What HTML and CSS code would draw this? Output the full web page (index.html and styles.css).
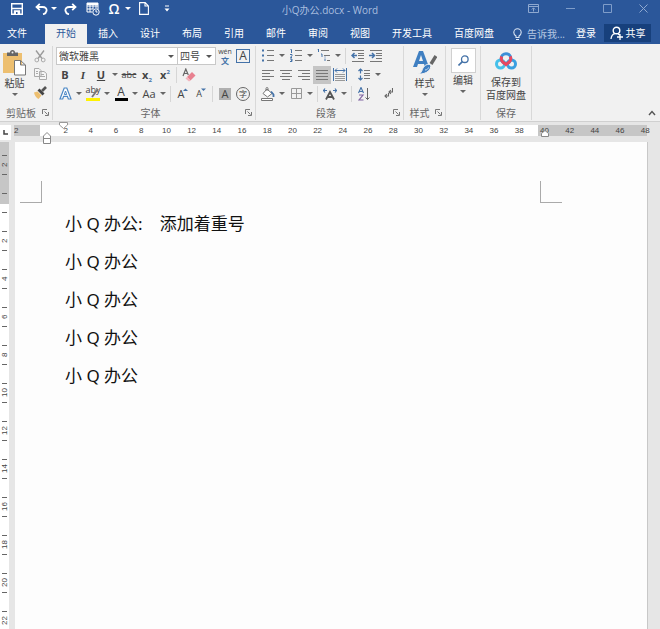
FILE: index.html
```html
<!DOCTYPE html>
<html lang="zh-CN">
<head>
<meta charset="utf-8">
<title>小Q办公.docx - Word</title>
<link rel="stylesheet" href="styles.css">
</head>
<body>
<header class="titlebar">
  <div class="quick">
    <button class="qa w34" aria-label="保存"><svg width="12" height="12" viewBox="0 0 12 12"><path d="M.7.7h10.6v10.6H.7z" fill="none" stroke="#fff" stroke-width="1.4"/><path d="M1 5.500h10M3.500 8h5v3h-5z" stroke="#fff" stroke-width="1.400" fill="#fff"/><path d="M5 9h1.500v2H5z" fill="#2b579a"/></svg></button>
    <button class="qa w14" aria-label="撤消"><svg width="13" height="12" viewBox="0 0 13 12"><path d="M4.800.8 1.500 4l3.300 3.200M2 4h5.500c3 0 4.500 1.500 4 4-.3 1.600-1.500 2.800-3.500 3.300" fill="none" stroke="#fff" stroke-width="1.800"/></svg></button>
    <button class="qa w12" aria-label="撤消选项"><i class="caret light"></i></button>
    <button class="qa w20" aria-label="恢复"><svg width="13" height="12" viewBox="0 0 13 12"><path d="M8.200.8 11.500 4 8.200 7.200M11 4H5.500c-3 0-4.500 1.500-4 4 .3 1.600 1.500 2.800 3.500 3.300" fill="none" stroke="#fff" stroke-width="1.800"/></svg></button>
    <button class="qa w26" aria-label="日期和时间"><svg width="14" height="14" viewBox="0 0 14 14"><path d="M1 1h11v6M1 1v9h5M1 4h11M1 7h6M4 1v9M7 1v6M10 1v5" fill="none" stroke="#fff"/><path d="M1 1h11v2H1z" fill="#fff"/><circle cx="10" cy="10" r="3.200" fill="#2b579a" stroke="#fff"/><path d="M10 8v2h1.500" fill="none" stroke="#fff"/></svg></button>
    <button class="qa w16 omega" aria-label="符号">Ω</button>
    <button class="qa w12" aria-label="符号选项"><i class="caret light"></i></button>
    <button class="qa w20" aria-label="新建"><svg width="10" height="13" viewBox="0 0 10 13"><path d="M.6.6h5.600L9.400 4v8.400H.6zM6 .6V4h3.400" fill="none" stroke="#fff" stroke-width="1.100"/></svg></button>
    <button class="qa w26" aria-label="自定义快速访问工具栏"><svg width="6" height="7" viewBox="0 0 6 7"><path d="M1 1h4" stroke="#fff"/><path d="M.5 3.500h5L3 6.500z" fill="#fff"/></svg></button>
  </div>
  <h1 class="doc-title">小Q办公.docx - Word</h1>
  <div class="window">
    <button aria-label="功能区显示选项"><svg width="11" height="9" viewBox="0 0 11 9"><path d="M.5.500h10v8H.5zM.5 2.500h10M5.500 7.500V4M3.800 5.500l1.700-1.700 1.700 1.700" fill="none" stroke="#8fa9d0"/></svg></button>
    <button aria-label="最小化"><svg width="9" height="9" viewBox="0 0 9 9"><path d="M0 4.500h9" stroke="#7f9dc9"/></svg></button>
    <button aria-label="最大化"><svg width="9" height="9" viewBox="0 0 9 9"><path d="M.5.500h8v8h-8z" fill="none" stroke="#7f9dc9"/></svg></button>
    <button aria-label="关闭"><svg width="9" height="9" viewBox="0 0 9 9"><path d="m.5.500 8 8m0-8-8 8" stroke="#8fa9d0"/></svg></button>
  </div>
</header>
<nav class="tabs">
  <a class="file" href="#">文件</a><a class="active" href="#">开始</a><a href="#">插入</a><a href="#">设计</a><a href="#">布局</a><a href="#">引用</a><a href="#">邮件</a><a href="#">审阅</a><a href="#">视图</a><a href="#">开发工具</a><a href="#">百度网盘</a>
  <button class="tell"><svg width="9" height="13" viewBox="0 0 9 13"><path d="M3 9.500V8C1.500 7 .8 6 .8 4.500a3.700 3.700 0 0 1 7.400 0C8.200 6 7.500 7 6 8v1.500zM3 11.500h3" fill="none" stroke="#dbe5f3" stroke-width="1.100"/></svg>告诉我...</button>
  <a class="login" href="#">登录</a>
  <button class="share"><svg width="13" height="14" viewBox="0 0 13 14"><circle cx="6.500" cy="4.500" r="3.300" fill="none" stroke="#fff" stroke-width="1.400"/><path d="M1 13c.3-3 1.500-4.700 3.800-5.300M8 8l1.500 1M7 11h6M10 8v6" fill="none" stroke="#fff" stroke-width="1.300"/></svg>共享</button>
</nav>
<section class="ribbon" aria-label="开始">
  <div class="group clipboard">
    <div class="body row-body">
      <button class="big"><svg width="23" height="26" viewBox="0 0 23 26"><path d="M0 3h19v20H0z" fill="#edbf70"/><path d="M4 2.500h3a2.500 2.500 0 0 1 5 0h3V6H4z" fill="#666"/><circle cx="9.500" cy="2.500" r="1" fill="#f1f1f1"/><path d="M11.500 10.500h6l5 4.500v10h-11zM17.500 10.500V15h5" fill="#fff" stroke="#777"/></svg><span>粘贴</span><i class="caret"></i></button>
      <div class="stack">
        <button class="ic" aria-label="剪切"><svg width="12" height="13" viewBox="0 0 12 13"><path d="m2 .5 6 8M10 .5l-6 8" stroke="#999" stroke-width="1.300"/><circle cx="2.800" cy="10" r="1.900" fill="none" stroke="#aaa"/><circle cx="9.200" cy="10" r="1.900" fill="none" stroke="#aaa"/></svg></button>
        <button class="ic" aria-label="复制"><svg width="13" height="12" viewBox="0 0 13 12"><path d="M.5.500H5l2 2V8.500H.5zM5.500 3.500H10l2.500 2v6h-7z" fill="#f5f5f5" stroke="#aaa"/><path d="M2 3.500h2M2 5.500h2M7 6.500h3M7 8.500h4" stroke="#aaa"/></svg></button>
        <button class="ic" aria-label="格式刷"><svg width="13" height="13" viewBox="0 0 13 13"><path d="m0 6.500 3.500-1L7.500 9.500 4.500 13C2.500 12 .5 9.500 0 6.500z" fill="#edbf70"/><path d="m3.500 4.500 5 5L10.500 7.500 5.500 2.500z" fill="#444"/><path d="m8 5 4-4" stroke="#555" stroke-width="2.600"/></svg></button>
      </div>
    </div>
    <footer><span>剪贴板</span><button class="launch" aria-label="剪贴板设置"><svg width="7" height="7" viewBox="0 0 7 7"><path d="M.5 5V.500H5M2.500 2.500l3 3M6.500 3v3.500H3" fill="none" stroke="#777"/></svg></button></footer>
  </div>

  <div class="group font">
    <div class="body">
      <div class="row first">
        <label class="combo family"><select aria-label="字体"><option>微软雅黑</option></select></label><label class="combo size"><select aria-label="字号"><option>四号</option></select></label>
        <button class="ic pinyin" aria-label="拼音指南"><span>wén</span><b>文</b></button>
        <button class="ic" aria-label="字符边框"><span class="boxed">A</span></button>
      </div>
      <div class="row">
        <button class="ic"><b>B</b></button><button class="ic serif"><em>I</em></button><button class="ic"><b class="under">U</b></button><button class="dd" aria-label="下划线选项"><i class="caret"></i></button><button class="ic small"><s>abc</s></button><button class="ic"><b>x<sub>2</sub></b></button><button class="ic"><b>x<sup>2</sup></b></button><i class="sep"></i>
        <button class="ic" aria-label="清除格式"><svg width="14" height="14" viewBox="0 0 14 14"><path d="m1 8 2.800-7 2.500 6M2 5.500h3.500" fill="none" stroke="#666" stroke-width="1.200"/><path d="m5 9 5-5 3.500 3.500-5 5z" fill="#e8808f"/><path d="m3.500 10.500 1.500-1.500 3.500 3.500L7 13.500z" fill="#f3b3bb"/></svg></button>
      </div>
      <div class="row">
        <button class="ic" aria-label="文本效果"><svg width="13" height="13" viewBox="0 0 13 13"><path d="M5.200 1h2.600L12 12H9.300l-.9-2.700H4.600L3.700 12H1z" fill="#fff" stroke="#4b87c5" stroke-width="1.200"/><path d="M5.300 7.500h2.400L6.500 4z" fill="#fff" stroke="#4b87c5"/></svg></button><button class="dd" aria-label="文本效果选项"><i class="caret"></i></button>
        <button class="ic mark" aria-label="突出显示"><span>aby</span><svg width="14" height="14" viewBox="0 0 14 14"><path d="M0 11h14v3H0z" fill="#fff200"/><path d="m6 10 6-8" stroke="#777" stroke-width="1.800"/></svg></button><button class="dd" aria-label="突出显示选项"><i class="caret"></i></button>
        <button class="ic"><span class="inked">A</span></button><button class="dd" aria-label="字体颜色选项"><i class="caret"></i></button><button class="ic">Aa</button><button class="dd" aria-label="更改大小写选项"><i class="caret"></i></button><i class="sep"></i>
        <button class="ic" aria-label="增大字号">A<svg class="tip" width="5" height="12" viewBox="0 0 5 12"><path d="M0 3h5L2.500.500z" fill="#4472a8"/></svg></button><button class="ic small" aria-label="减小字号">A<svg class="tip" width="5" height="12" viewBox="0 0 5 12"><path d="M0 .5h5L2.500 3z" fill="#4472a8"/></svg></button><i class="sep"></i>
        <button class="ic"><span class="shade">A</span></button><button class="ic"><span class="ring">字</span></button>
      </div>
    </div>
    <footer><span>字体</span><button class="launch" aria-label="字体设置"><svg width="7" height="7" viewBox="0 0 7 7"><path d="M.5 5V.500H5M2.500 2.500l3 3M6.500 3v3.500H3" fill="none" stroke="#777"/></svg></button></footer>
  </div>

  <div class="group paragraph">
    <div class="body">
      <div class="row first">
        <button class="ic" aria-label="项目符号"><svg width="12" height="13" viewBox="0 0 12 13"><path d="M0 1.500h2M0 6.500h2M0 11.500h2" stroke="#4472a8" stroke-width="2"/><path d="M5 1.500h7M5 6.500h7M5 11.500h7" stroke="#777"/></svg></button><button class="dd" aria-label="项目符号选项"><i class="caret"></i></button>
        <button class="ic" aria-label="编号"><svg width="12" height="13" viewBox="0 0 12 13"><path d="M.5.500h1V4M0 5.500h2v1L.5 8.500H2M0 10h2v1.200H1h1v1.300H0" fill="none" stroke="#4472a8"/><path d="M5 1.500h7M5 6.500h7M5 11.500h7" stroke="#777"/></svg></button><button class="dd" aria-label="编号选项"><i class="caret"></i></button>
        <button class="ic" aria-label="多级列表"><svg width="14" height="13" viewBox="0 0 14 13"><path d="M.5 0h1v3M4 5h1v3M8 9.500V12M8 7.500v1" fill="none" stroke="#4472a8"/><path d="M4 1.500h8M7 6.500h6M10 11.500h3" stroke="#777"/></svg></button><button class="dd" aria-label="多级列表选项"><i class="caret"></i></button><i class="sep"></i>
        <button class="ic" aria-label="减少缩进"><svg width="14" height="12" viewBox="0 0 14 12"><path d="M1 .5h12M7 3.500h6M7 5.500h6M7 8.500h6M1 11.500h12" stroke="#777"/><path d="M6 5.500H1M3.500 3 1 5.500 3.500 8" fill="none" stroke="#4472a8" stroke-width="1.500"/></svg></button>
        <button class="ic" aria-label="增加缩进"><svg width="14" height="12" viewBox="0 0 14 12"><path d="M1 .5h12M7 3.500h6M7 5.500h6M7 8.500h6M1 11.500h12" stroke="#777"/><path d="M0 5.500h5M3 3l2.500 2.500L3 8" fill="none" stroke="#4472a8" stroke-width="1.500"/></svg></button>
      </div>
      <div class="row">
        <button class="ic" aria-label="左对齐"><svg width="12" height="10" viewBox="0 0 12 10"><path d="M0 .5h12M0 3.500h8M0 6.500h12M0 9.500h8" stroke="#777"/></svg></button>
        <button class="ic" aria-label="居中"><svg width="12" height="10" viewBox="0 0 12 10"><path d="M0 .5h12M2 3.500h8M0 6.500h12M2 9.500h8" stroke="#777"/></svg></button>
        <button class="ic" aria-label="右对齐"><svg width="12" height="10" viewBox="0 0 12 10"><path d="M0 .5h12M4 3.500h8M0 6.500h12M4 9.500h8" stroke="#777"/></svg></button>
        <button class="ic on" aria-label="两端对齐"><svg width="12" height="10" viewBox="0 0 12 10"><path d="M0 .5h12M0 3.500h12M0 6.500h12M0 9.500h12" stroke="#777"/></svg></button>
        <button class="ic" aria-label="分散对齐"><svg width="14" height="13" viewBox="0 0 14 13"><path d="M.5 0v13M13.500 0v13" stroke="#4472a8"/><path d="M2 2.500h10M4 .5l-2 2 2 2M10 .5l2 2-2 2" fill="none" stroke="#4472a8"/><path d="M2 6.500h10M2 8.500h10M2 10.500h10M2 12.500h10" stroke="#999"/></svg></button><i class="sep blank"></i>
        <button class="ic" aria-label="行距"><svg width="12" height="13" viewBox="0 0 12 13"><path d="M2.500 1v4.500M2.500 7.500V12M.5 3l2-2 2 2M.5 10l2 2 2-2" fill="none" stroke="#4472a8" stroke-width="1.200"/><path d="M6 2.500h6M6 5.500h6M6 7.500h6M6 10.500h6" stroke="#777"/></svg></button><button class="dd" aria-label="行距选项"><i class="caret"></i></button>
      </div>
      <div class="row">
        <button class="ic" aria-label="底纹"><svg width="14" height="14" viewBox="0 0 14 14"><path d="m6 2 5 4.500-4.500 3.500L2 6.500zM5 4V1.500a1 1 0 0 1 2 0V4" fill="#fff" stroke="#777"/><path d="m10 4.500 2.500 3v2.500" fill="none" stroke="#4472a8" stroke-width="1.800"/><path d="M.5 11.500h11v2H.5z" fill="#fff" stroke="#777"/></svg></button><button class="dd" aria-label="底纹选项"><i class="caret"></i></button>
        <button class="ic" aria-label="边框"><svg width="11" height="11" viewBox="0 0 11 11"><path d="M.5.500h10v10H.5zM5.500 0v11M0 5.500h11" fill="none" stroke="#999"/></svg></button><button class="dd" aria-label="边框选项"><i class="caret"></i></button><i class="sep"></i>
        <button class="ic" aria-label="中文版式"><svg width="14" height="12" viewBox="0 0 14 12"><path d="M3 11.500 7 4l4 7.500M4.500 9h5" fill="none" stroke="#555" stroke-width="1.800"/><path d="M0 2.500h4M2 .5l-1.500 2L2 4.500M14 2.500h-4M12 .5l1.500 2-1.500 2" fill="none" stroke="#4472a8" stroke-width="1.200"/></svg></button><button class="dd" aria-label="中文版式选项"><i class="caret"></i></button><i class="sep"></i>
        <button class="ic" aria-label="排序"><svg width="12" height="14" viewBox="0 0 12 14"><path d="m.5 6 2.500-5.500L5.500 6M1.500 4.500h3" fill="none" stroke="#4472a8" stroke-width="1.100"/><path d="M1 8h4l-4 5h4.500" fill="none" stroke="#8064a2" stroke-width="1.200"/><path d="M9.500 1v11.500M7.500 10.500l2 2 2-2" fill="none" stroke="#666"/></svg></button><i class="sep blank"></i>
        <button class="ic" aria-label="显示编辑标记"><svg width="9" height="11" viewBox="0 0 9 11"><path d="M8.500 0v4H5.500M6.800 2.200 5 4l1.800 1.800M4.500 5v3H1M2.800 6.200 1 8l1.800 1.800" fill="none" stroke="#666" stroke-width="1.100"/></svg></button>
      </div>
    </div>
    <footer><span>段落</span><button class="launch" aria-label="段落设置"><svg width="7" height="7" viewBox="0 0 7 7"><path d="M.5 5V.500H5M2.500 2.500l3 3M6.500 3v3.500H3" fill="none" stroke="#777"/></svg></button></footer>
  </div>

  <div class="group styles">
    <div class="body">
      <button class="big"><svg width="24" height="26" viewBox="0 0 24 26"><path d="M0 17 6 1h4l6 16h-4l-1-3H5l-1 3zM6 11h4L8 5z" fill="#3f7fc1"/><path d="m23 6-5 8" stroke="#666" stroke-width="3.400"/><path d="M17.500 14.500c1.500 5-4 10-12 9.500 4-1 3-5 6-8 1.500-1.500 4-2 6-1.500z" fill="#3f7fc1" stroke="#f1f1f1"/><path d="M12 20c2 0 3-1 3.500-2.500" fill="none" stroke="#cfe0f2"/></svg><span>样式</span><i class="caret"></i></button>
    </div>
    <footer><span>样式</span><button class="launch" aria-label="样式设置"><svg width="7" height="7" viewBox="0 0 7 7"><path d="M.5 5V.500H5M2.500 2.500l3 3M6.500 3v3.500H3" fill="none" stroke="#777"/></svg></button></footer>
  </div>

  <div class="group edit">
    <div class="body">
      <button class="big"><span class="tile"><svg width="11" height="11" viewBox="0 0 11 11"><circle cx="6.800" cy="4.200" r="3.300" fill="none" stroke="#4472a8" stroke-width="1.300"/><path d="M4.400 6.600.5 10.500" stroke="#4472a8" stroke-width="1.600"/></svg></span><span>编辑</span><i class="caret"></i></button>
    </div>
  </div>

  <div class="group save">
    <div class="body">
      <button class="big"><svg width="22" height="26" viewBox="0 0 22 26"><g fill="none" stroke-width="3"><circle cx="5.500" cy="14" r="4" stroke="#45c0ea"/><circle cx="16.500" cy="14" r="4" stroke="#3a9fe0"/><circle cx="11" cy="8.500" r="4.800" stroke="#3d8fd8"/><path d="M6.800 6.500a4.800 4.800 0 0 0 1 5.500L11 14.500l3.200-2.500a4.800 4.800 0 0 0 1-5.500" stroke="#e9485f"/></g></svg><span>保存到</span><span>百度网盘</span></button>
    </div>
    <footer><span>保存</span></footer>
  </div>
  <button class="collapse" aria-label="折叠功能区"><svg width="8" height="6" viewBox="0 0 8 6"><path d="m1 5 3-3.500L7 5" fill="none" stroke="#555" stroke-width="1.400"/></svg></button>
</section>

<div class="ruler">
  <button class="tabstop" aria-label="制表符"><svg width="5" height="5" viewBox="0 0 5 5"><path d="M1 0v4h4" fill="none" stroke="#444" stroke-width="1.500"/></svg></button>
  <div class="scale">
    <span class="before">2</span>
    <ol><li>2</li><li>4</li><li>6</li><li>8</li><li>10</li><li>12</li><li>14</li><li>16</li><li>18</li><li>20</li><li>22</li><li>24</li><li>26</li><li>28</li><li>30</li><li>32</li><li>34</li><li>36</li><li>38</li><li>40</li><li>42</li><li>44</li><li>46</li><li>48</li></ol>
    <svg class="marker first-line" width="9" height="7" viewBox="0 0 9 7"><path d="M.5.500h8V3l-4 3.500-4-3.500z" fill="#fff" stroke="#999"/></svg>
    <svg class="marker hanging" width="8" height="12" viewBox="0 0 8 12"><path d="M.5 11.500V4L4 .500 7.500 4v7.500zM.5 6.500h7" fill="#fff" stroke="#888"/></svg>
    <svg class="marker right" width="8" height="7" viewBox="0 0 8 7"><path d="M.5 6.500v-3L4 .500l3.500 3v3z" fill="#fff" stroke="#888"/></svg>
  </div>
</div>

<main class="workspace">
  <ol class="vruler"><li>2</li><li></li><li>2</li><li>4</li><li>6</li><li>8</li><li>10</li><li>12</li><li>14</li><li>16</li><li>18</li><li>20</li><li>22</li></ol>
  <article class="page">
    <div class="margins"><i class="corner left"></i><i class="corner right"></i></div>
    <div class="text" contenteditable="true" spellcheck="false">
      <p>小 Q 办公:&emsp;添加着重号</p>
      <p>小 Q 办公</p>
      <p>小 Q 办公</p>
      <p>小 Q 办公</p>
      <p>小 Q 办公</p>
    </div>
  </article>
</main>
</body>
</html>
```

FILE: styles.css
```css
* { box-sizing: border-box; }

body {
  margin: 0;
  min-height: 100vh;
  display: flex;
  flex-direction: column;
  overflow: hidden;
  background: #e6e6e6;
  color: #444;
  font: 10px/14px "Open Sans", "Noto Sans CJK SC", sans-serif;
}

button {
  display: flex;
  align-items: center;
  justify-content: center;
  margin: 0;
  padding: 0;
  border: 0;
  background: none;
  color: inherit;
  font: inherit;
}

a { color: inherit; text-decoration: none; }
ol { list-style: none; margin: 0; padding: 0; }
svg { display: block; flex: none; }

.caret {
  border: 3px solid transparent;
  border-top-color: #666;
  border-bottom: 0;
}
.caret.light { border-top-color: #fff; }

/* Title bar */
.titlebar {
  display: grid;
  grid-template-columns: 1fr auto 1fr;
  height: 24px;
  background: #2b579a;
}
.quick { display: flex; height: 17px; }
.w34 { width: 34px; }
.w14 { width: 14px; }
.w12 { width: 12px; }
.w20 { width: 20px; }
.w26 { width: 26px; }
.w16 { width: 16px; }
.omega { color: #fff; font-size: 14px; font-weight: 600; }
.doc-title {
  margin: 0;
  padding-top: 3px;
  color: #a9bedf;
  font-size: 10px;
  font-weight: 400;
}
.window { display: flex; justify-content: flex-end; height: 17px; }
.window button { width: 37px; }
.window button:last-child { width: 34px; }

/* Ribbon tabs */
.tabs {
  display: flex;
  height: 20px;
  background: #2b579a;
  color: #fff;
  line-height: 19px;
  white-space: nowrap;
}
.tabs a { padding: 0 11px; }
.tabs .file { width: 45px; padding: 0 7px; }
.tabs .active { background: #f1f1f1; color: #2b579a; }
.tabs .tell { gap: 5px; padding: 0 0 0 8px; color: #b5c7e3; }
.tabs .login { margin-left: auto; padding: 0 8px; }
.tabs .share { gap: 3px; width: 47px; height: 18px; margin-right: 9px; background: #17407c; }

/* Ribbon */
.ribbon {
  display: flex;
  height: 78px;
  background: #f1f1f1;
  border-bottom: 1px solid #d0d0d0;
}
.group {
  display: flex;
  flex-direction: column;
  flex: none;
  height: 74px;
  margin-top: 2px;
  border-right: 1px solid #d8d8d8;
}
.body { height: 58px; }
.row-body { display: flex; }
.group footer {
  display: flex;
  align-items: center;
  height: 16px;
  padding: 1px 2px 0;
  color: #666;
}
.group footer span { flex: 1; text-align: center; }
.group .launch { width: 10px; height: 10px; }
.clipboard { width: 53px; }
.clipboard .big { width: 29px; }
.font { width: 203px; padding-left: 3px; }
.paragraph { width: 148px; padding-left: 3px; }
.styles { width: 42px; }
.edit { width: 35px; }
.save { width: 51px; }

.big {
  flex-direction: column;
  justify-content: flex-start;
  width: 100%;
  padding-top: 4px;
  line-height: 12px;
  white-space: nowrap;
}
.big svg + span, .tile + span { margin-top: 1px; }
.big .caret { margin-top: 4px; }
.save .big { line-height: 13px; }
.save .big svg + span { margin-top: 0; }
.tile {
  display: grid;
  place-items: center;
  width: 25px;
  height: 25px;
  background: #fff;
  border: 1px solid #d0d0d0;
}
.edit .big { padding-top: 2px; }
.stack { display: flex; flex-direction: column; padding: 1px 0 0 2px; }

.row { display: flex; align-items: center; height: 19px; }
.ic {
  flex: none;
  width: 18px;
  height: 18px;
  font-size: 11px;
  white-space: nowrap;
}
.dd { flex: none; width: 10px; height: 18px; }
.small { font-size: 9px; }
.on { background: #c5c5c5; }
.sep {
  flex: none;
  width: 6px;
  height: 16px;
  background: linear-gradient(90deg, transparent 2px, #d6d6d6 2px 3px, transparent 3px);
}
.sep.blank { background: none; }
.serif { font-family: "Liberation Serif", serif; font-weight: 700; }
.under { text-decoration: underline; }
.ic sub, .ic sup { font-size: 6px; line-height: 0; color: #4472a8; }
.tip { margin-left: -1px; }
.boxed {
  width: 14px;
  height: 14px;
  border: 1px solid #4472a8;
  font-size: 12px;
  line-height: 12px;
}
.pinyin { flex-direction: column; font-size: 7px; line-height: 9px; }
.pinyin b { color: #4472a8; font-size: 8px; line-height: 9px; }
.mark { display: grid; place-items: center; font-size: 9px; line-height: 9px; }
.mark > * { grid-area: 1 / 1; }
.mark span { align-self: start; }
.inked { width: 13px; border-bottom: 3px solid #000; font-size: 12px; line-height: 12px; }
.shade { width: 12px; background: #b0b0b0; line-height: 12px; }
.ring {
  width: 14px;
  height: 14px;
  border: 1px solid #666;
  border-radius: 50%;
  font-size: 8px;
  line-height: 12px;
}

.combo {
  position: relative;
  height: 18px;
  background: #fff;
  border: 1px solid #c8c8c8;
}
.combo::after {
  content: "";
  position: absolute;
  top: 7px;
  right: 3px;
  border: 3px solid transparent;
  border-top-color: #555;
  border-bottom: 0;
}
.combo select {
  appearance: none;
  width: 100%;
  height: 16px;
  padding: 0 2px;
  border: 0;
  background: none;
  color: #444;
  font: inherit;
}
.family { width: 122px; }
.size { width: 38px; border-left: 0; }

.collapse { align-self: flex-end; width: 16px; height: 16px; margin-left: auto; }

/* Horizontal ruler */
.ruler { display: flex; height: 20px; padding-top: 3px; }
.tabstop { width: 11px; height: 15px; margin-right: 3px; background: #fff; }
.scale {
  position: relative;
  flex: 1;
  height: 11px;
  margin-right: 13px;
  background: linear-gradient(90deg, #c6c6c6 26px, #fff 26px calc(100% - 109px), #c6c6c6 calc(100% - 109px));
  font: 8px/11px "Liberation Sans", sans-serif;
}
.scale ol { display: flex; margin: 0 -11px 0 39px; }
.scale li { flex: 1 1 0; text-align: center; }
.before { position: absolute; left: 0; }
.marker { position: absolute; }
.first-line { left: 45px; top: -3px; }
.hanging { left: 29px; top: 7px; }
.marker.right { right: 98px; top: 5px; }

/* Document area */
.workspace { display: flex; flex: 1; }
.vruler {
  width: 9px;
  height: calc(100vh - 142px);
  padding-top: 4px;
  overflow: hidden;
  background: linear-gradient(#c6c6c6 62px, #fff 62px);
  font: 8px/9px "Liberation Sans", sans-serif;
}
.vruler li {
  width: 9px;
  height: 38px;
  text-align: center;
  writing-mode: vertical-rl;
  transform: rotate(180deg);
  background:
    linear-gradient(#666, #666) 2px 9px / 5px 1px no-repeat,
    linear-gradient(#666, #666) 2px 28px / 5px 1px no-repeat;
}
.page {
  flex: 1;
  margin: 0 13px 0 6px;
  background: #fdfdfd;
  box-shadow: 1px 0 #c8c8c8;
}
.margins {
  display: flex;
  justify-content: space-between;
  padding: 39px 85px 0 5px;
}
.corner { width: 22px; height: 22px; border-bottom: 1px solid #aaa; }
.corner.left { border-right: 1px solid #aaa; }
.corner.right { border-left: 1px solid #aaa; }
.text {
  padding: 2px 106px 0 50px;
  color: #111;
  font: 17px/38px "Noto Sans", "Noto Sans CJK SC", sans-serif;
}
.text p { margin: 0; }
```
